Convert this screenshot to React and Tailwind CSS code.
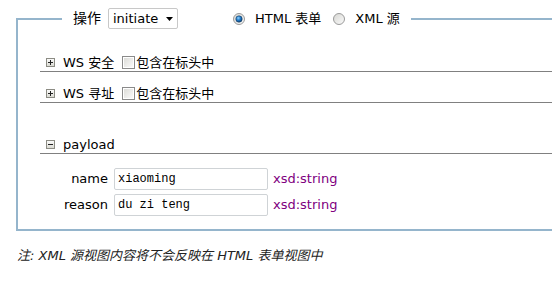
import React from 'react';

const FONT = "[font-family:'DejaVu_Sans','Noto_Sans_CJK_SC',sans-serif]";

function Expander({ open }) {
  return (
    <svg width="9" height="9" viewBox="0 0 9 9" className="shrink-0">
      <defs>
        <linearGradient id={open ? 'exo' : 'exc'} x1="0" y1="0" x2="0" y2="1">
          <stop offset="0" stopColor="#fdfdfd" />
          <stop offset="1" stopColor="#d8d8d0" />
        </linearGradient>
      </defs>
      <rect x="0.5" y="0.5" width="8" height="8" fill={`url(#${open ? 'exo' : 'exc'})`} stroke="#8c8c84" />
      <rect x="2" y="4" width="5" height="1" fill="#222" />
      {!open && <rect x="4" y="2" width="1" height="5" fill="#222" />}
    </svg>
  );
}

function Checkbox() {
  return (
    <svg width="13" height="13" viewBox="0 0 13 13" className="shrink-0">
      <defs>
        <linearGradient id="cbg" x1="0" y1="0" x2="1" y2="1">
          <stop offset="0" stopColor="#dcdcd8" />
          <stop offset="1" stopColor="#fafafa" />
        </linearGradient>
      </defs>
      <rect x="0.5" y="0.5" width="12" height="12" fill="#fff" stroke="#8a8a8a" />
      <rect x="2" y="2" width="9" height="9" fill="url(#cbg)" />
    </svg>
  );
}

function Radio({ checked }) {
  const id = checked ? 'rc' : 'ru';
  return (
    <svg width="12" height="12" viewBox="0 0 12 12" className="shrink-0">
      <defs>
        <linearGradient id={id} x1="0" y1="0" x2="1" y2="1">
          <stop offset="0" stopColor="#d6d6d2" />
          <stop offset="1" stopColor="#fbfbfb" />
        </linearGradient>
        <radialGradient id="dot" cx="0.4" cy="0.35" r="0.7">
          <stop offset="0" stopColor="#8fd0ff" />
          <stop offset="0.5" stopColor="#1f7ac8" />
          <stop offset="1" stopColor="#0b3e73" />
        </radialGradient>
      </defs>
      <circle cx="6" cy="6" r="5.5" fill={`url(#${id})`} stroke="#9a9a9a" />
      {checked && <circle cx="6" cy="6" r="3.2" fill="url(#dot)" stroke="#1a3d5e" strokeWidth="0.6" />}
    </svg>
  );
}

function Section({ label, open, checkbox, className }) {
  return (
    <div className={`h-[18px] pl-[6px] flex items-center border-b border-[#808080] ${className}`}>
      <Expander open={open} />
      <span className="ml-[8px] text-[13px] text-black leading-none">{label}</span>
      {checkbox && (
        <>
          <span className="ml-[8px]"><Checkbox /></span>
          <span className="ml-[1px] text-[13px] text-black leading-none">包含在标头中</span>
        </>
      )}
    </div>
  );
}

function Field({ label, value }) {
  return (
    <div className="flex items-center h-[22px]">
      <span className="w-[90px] text-right text-[13px] text-black">{label}</span>
      <div className="ml-[6px] w-[154px] h-[22px] border border-[#cfd3d6] rounded-[2px] bg-white pl-[3px] flex items-center text-[12px] text-black [font-family:'Liberation_Mono',monospace]">
        {value}
      </div>
      <span className="ml-[5px] text-[13px] text-[#800080]">xsd:string</span>
    </div>
  );
}

export default function App() {
  return (
    <div className={`w-[552px] h-[307px] bg-white overflow-hidden pt-[8px] ${FONT}`}>
      <fieldset className="ml-[16px] border-2 border-r-0 border-[#95b5cc] p-0 m-0 min-w-0">
        <legend className="ml-[44px] px-[11px]">
          <div className="flex items-center h-[21px]">
            <span className="text-[14px] text-black">操作</span>
            <div className="ml-[7px] w-[70px] h-[21px] border border-[#c8c8c8] rounded-[2px] flex items-center pl-[4px] pr-[4px]">
              <span className="text-[13px] text-black flex-1">initiate</span>
              <svg width="7" height="4" viewBox="0 0 7 4"><path d="M0 0H7L3.5 4Z" fill="#000" /></svg>
            </div>
            <span className="ml-[55px]"><Radio checked /></span>
            <span className="ml-[10px] text-[13px] text-black">HTML 表单</span>
            <span className="ml-[12px]"><Radio /></span>
            <span className="ml-[10px] text-[13px] text-black">XML 源</span>
          </div>
        </legend>
        <div className="pl-[22px] pt-[25px] pb-[13px]">
          <Section label="WS 安全" checkbox className="" />
          <Section label="WS 寻址" checkbox className="mt-[13px]" />
          <Section label="payload" open className="mt-[33px]" />
          <div className="mt-[14px] flex flex-col gap-[4px] -ml-[22px]">
            <Field label="name" value="xiaoming" />
            <Field label="reason" value="du zi teng" />
          </div>
        </div>
      </fieldset>
      <p className="mt-[15px] ml-[17px] text-[13px] italic text-[#222]">
        注: XML 源视图内容将不会反映在 HTML 表单视图中
      </p>
    </div>
  );
}
